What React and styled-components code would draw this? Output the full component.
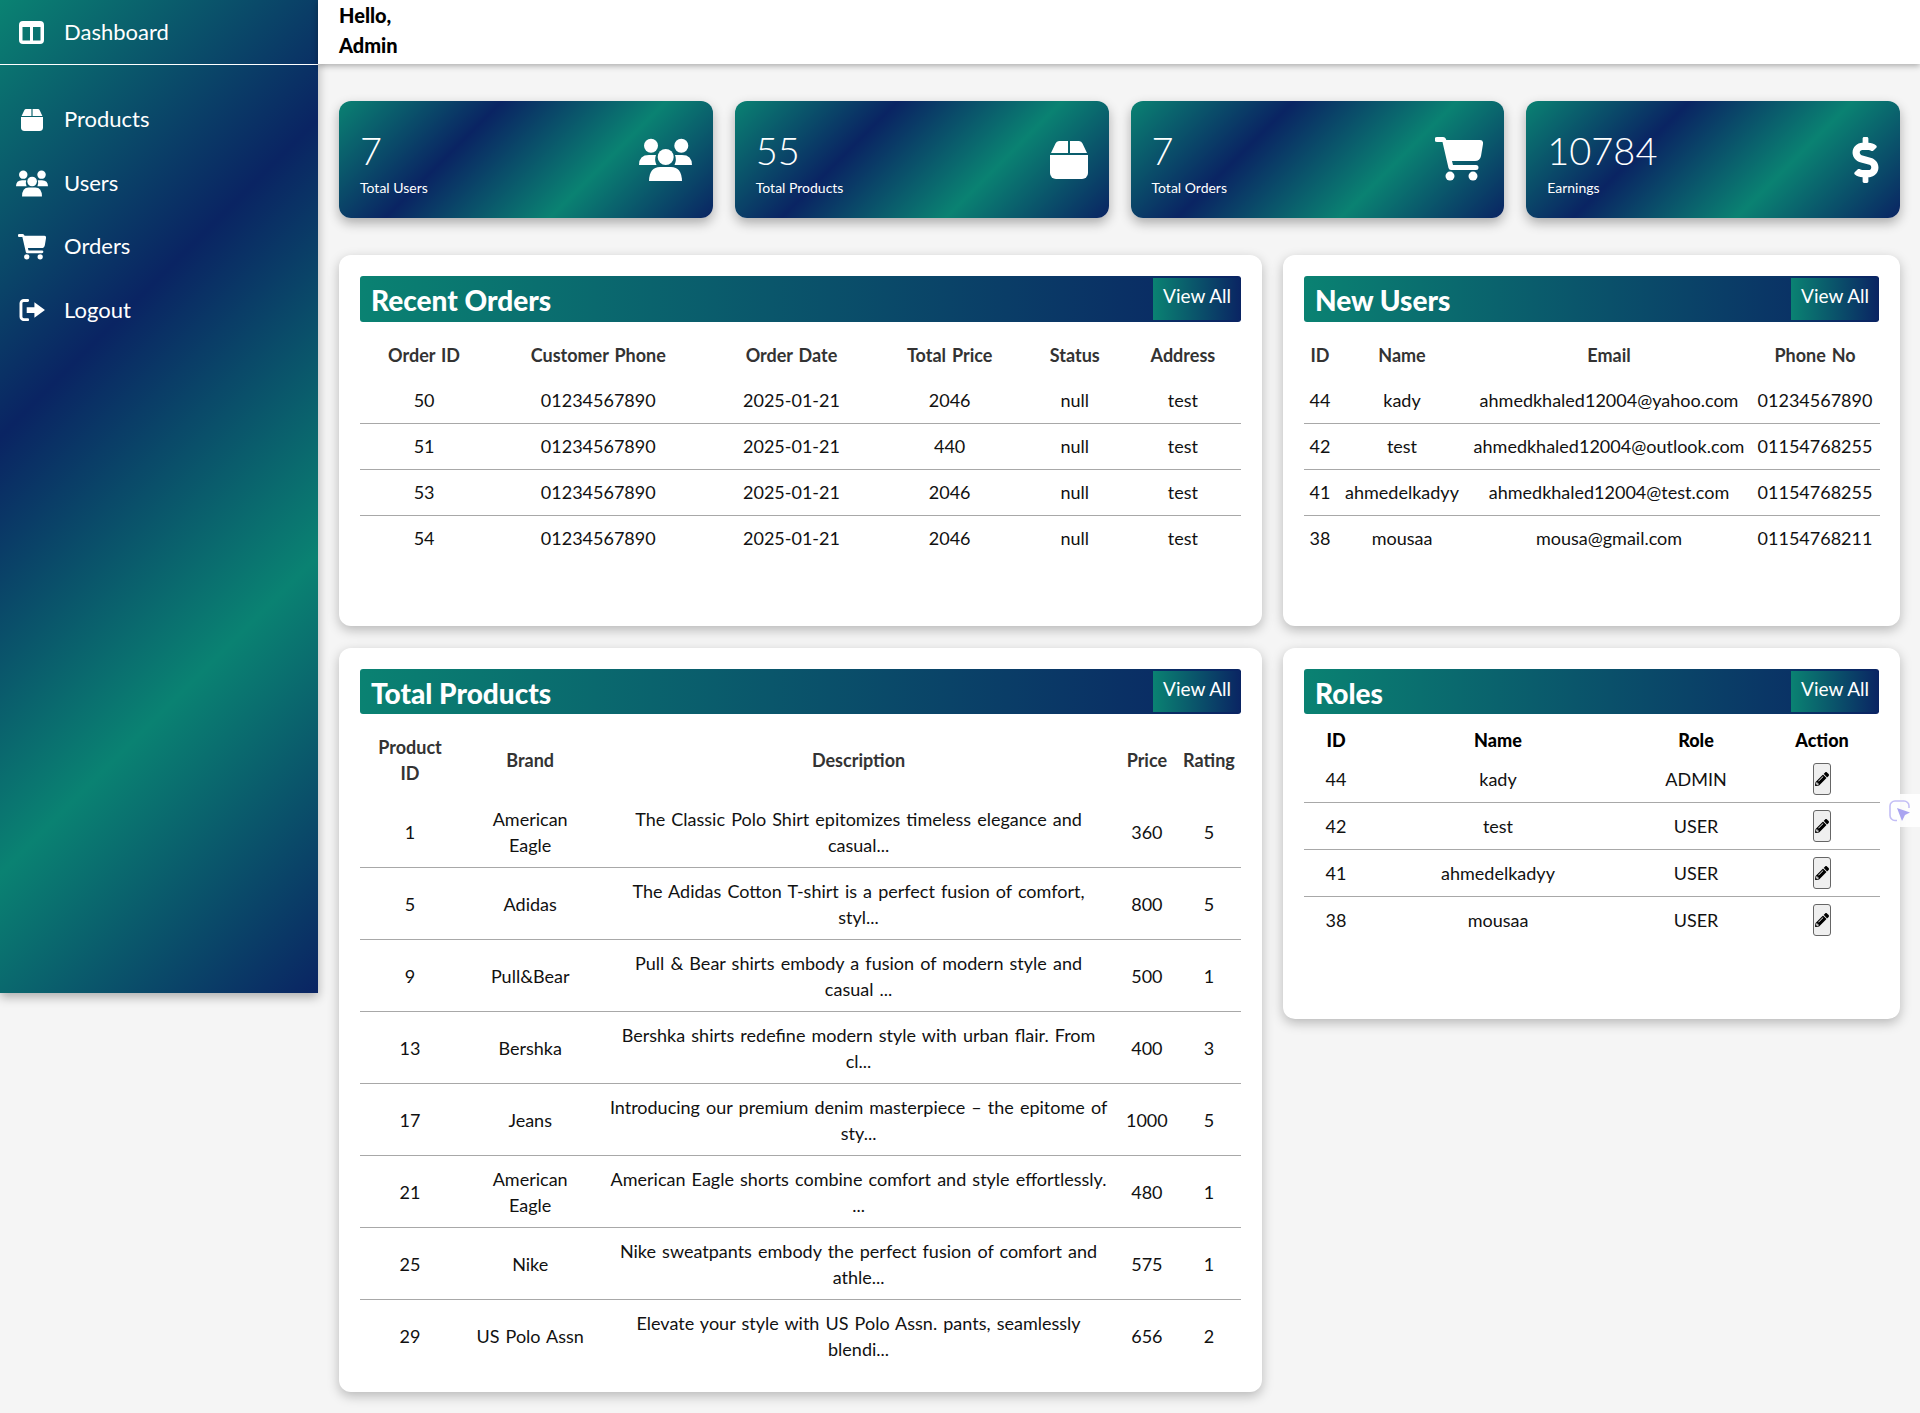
import React from "react";
import styled, { createGlobalStyle } from "styled-components";
import { FaDollarSign, FaPencilAlt } from "react-icons/fa";

const teal = "#0a8272";
const navy = "#0a2463";
const multi = `linear-gradient(135deg, ${teal}, ${navy}, ${teal}, ${navy})`;
const bar = `linear-gradient(to right, ${teal}, ${navy})`;

const Global = createGlobalStyle`
  * { box-sizing: border-box; }
  html, body { margin: 0; background: #f5f5f5; }
  body { font-family: "Lato", "Liberation Sans", sans-serif; color: #000; }
`;

const Page = styled.div`
  display: flex;
  align-items: flex-start;
  min-height: 1413px;
  position: relative;
  overflow: hidden;
`;

const Sidebar = styled.aside`
  width: 318px;
  height: 993px;
  flex-shrink: 0;
  background: ${multi};
  box-shadow: 0 4px 10px rgba(0, 0, 0, 0.3);
  color: #fff;
`;

const Brand = styled.div`
  height: 65px;
  display: flex;
  align-items: center;
  border-bottom: 1px solid #fff;
`;

const NavList = styled.nav`
  display: flex;
  flex-direction: column;
  padding-top: 23px;
`;

const NavItem = styled.div`
  height: 63.5px;
  display: flex;
  align-items: center;
`;

const NavIcon = styled.span`
  width: 64px;
  display: flex;
  justify-content: center;
  padding-right: 1px;
`;

const NavLabel = styled.span`
  font-size: 22px;
  position: relative;
  top: -1px;
`;

const Main = styled.main`
  flex: 1;
  min-width: 0;
`;

const TopBar = styled.header`
  height: 64px;
  background: #fff;
  box-shadow: 0 2px 6px rgba(0, 0, 0, 0.3);
  padding: 0 21px;
  font-size: 20px;
  font-weight: 900;
  line-height: 30px;
`;

const Content = styled.div`
  padding: 37px 20px 21px 21px;
`;

const StatRow = styled.section`
  display: grid;
  grid-template-columns: repeat(4, 1fr);
  gap: 22px;
  margin-bottom: 37px;
`;

const StatCard = styled.div`
  height: 117px;
  display: flex;
  align-items: center;
  justify-content: space-between;
  padding: 0 21px;
  border-radius: 12px;
  background: ${multi};
  box-shadow: 0 5px 12px rgba(0, 0, 0, 0.3);
  color: #fff;
`;

const StatValue = styled.div`
  margin-top: 4px;
  font-size: 38px;
  font-weight: 300;
  line-height: 50px;
`;

const StatLabel = styled.div`
  font-size: 14px;
  line-height: 20px;
  margin-top: 3px;
`;

const StatIcon = styled.span`
  display: flex;
`;

const Dollar = styled(FaDollarSign)`
  width: 27px;
  height: 46px;
`;

const PanelGrid = styled.section`
  display: grid;
  grid-template-columns: 923px 617px;
  gap: 21.5px 21px;
  align-items: start;
`;

const Panel = styled.div`
  min-height: 371px;
  padding: 21px;
  background: #fff;
  border-radius: 12px;
  box-shadow: 0 4px 12px rgba(0, 0, 0, 0.25);
`;

const PanelHead = styled.div`
  height: 45.5px;
  margin-bottom: 10px;
  display: flex;
  justify-content: space-between;
  align-items: flex-start;
  padding: 2px 0 0 11px;
  border-radius: 3px;
  background: ${bar};
  color: #fff;
`;

const PanelTitle = styled.h2`
  margin: 0;
  font-size: 28px;
  font-weight: 900;
  line-height: 44px;
`;

const ViewAll = styled.button`
  width: 88px;
  height: 41.5px;
  border: 0;
  padding: 0 0 6px;
  background: ${bar};
  color: #fff;
  font: 400 19px "Lato", "Liberation Sans", sans-serif;
`;

const Table = styled.table`
  width: 100%;
  table-layout: fixed;
  border-collapse: collapse;
  text-align: center;
  font-size: 18px;
  line-height: 26px;
  word-spacing: 1.5px;
`;

const Th = styled.th`
  padding: ${(p) => (p.$tight ? "3px" : "10px")} 0;
  font-weight: ${(p) => (p.$tight ? 900 : 700)};
  color: ${(p) => (p.$tight ? "#000" : "#333")};
  white-space: pre-line;
`;

const Td = styled.td`
  padding: ${(p) => (p.$tight ? "7px" : "9.5px")} 0;
  color: #111;
  white-space: pre-line;
`;

const Tr = styled.tr`
  border-bottom: 1px solid #a8a8a8;
  &:last-child { border-bottom: 0; }
`;

const EditButton = styled.button`
  width: 18px;
  height: 32px;
  padding: 0;
  display: inline-flex;
  align-items: center;
  justify-content: center;
  vertical-align: middle;
  font-size: 14px;
  color: #000;
  background: #efefef;
  border: 1px solid #666;
  border-radius: 3px;
`;

const EdgeTab = styled.div`
  position: absolute;
  top: 794px;
  right: 0;
  width: 37px;
  height: 33px;
  display: flex;
  align-items: center;
  padding-left: 6px;
  background: rgba(255, 255, 255, 0.85);
  border-radius: 8px 0 0 8px;
`;

function ColumnsIcon({ size }) {
  return (
    <svg width={size} height={size * 0.92} viewBox="0 0 25 23" fill="#fff">
      <path
        fillRule="evenodd"
        d="M4 0H21a4 4 0 0 1 4 4V19a4 4 0 0 1-4 4H4a4 4 0 0 1-4-4V4a4 4 0 0 1 4-4ZM3.500 6V19.500H11V6ZM14 6V19.500H21.500V6Z"
      />
    </svg>
  );
}

function BoxIcon({ size }) {
  return (
    <svg width={size} height={size} viewBox="0 0 38 38" fill="#fff">
      <path d="M1 12L5.500 2.500Q6.500 0 9 0H18V12Z" />
      <path d="M20 0H29Q31.500 0 32.500 2.500L37 12H20Z" />
      <path d="M0 14H38V32a6 6 0 0 1-6 6H6a6 6 0 0 1-6-6Z" />
    </svg>
  );
}

function UsersIcon({ size }) {
  return (
    <svg width={size} height={size * 0.83} viewBox="0 0 53 44" fill="#fff">
      <circle cx="12" cy="7.700" r="7" />
      <circle cx="42.300" cy="7.700" r="7" />
      <circle cx="26.700" cy="19" r="8" />
      <path d="M0 27Q0 17 10 17H17Q15 22 17.500 27Z" />
      <path d="M53 27Q53 17 43 17H36Q38 22 35.500 27Z" />
      <path d="M10 44Q10 29 21 29H32Q43 29 43 44Z" />
    </svg>
  );
}

function CartIcon({ size }) {
  return (
    <svg width={size} height={size * 0.92} viewBox="0 0 48 44" fill="#fff">
      <path d="M2 0H8Q10.500 0 11.300 3H45Q48.500 3 48 7L46 19Q45 24 40 24H17L18 28H41a2.500 2.500 0 0 1 0 5H16Q14 33 13.500 31L7.500 5H2a2.500 2.500 0 0 1 0-5Z" />
      <circle cx="15" cy="39" r="4.500" />
      <circle cx="38" cy="39" r="4.500" />
    </svg>
  );
}

function LogoutIcon({ size }) {
  return (
    <svg width={size} height={size * 0.85} viewBox="0 0 27 23">
      <path d="M9 1.500H5a3 3 0 0 0-3 3v14a3 3 0 0 0 3 3h4" fill="none" stroke="#fff" strokeWidth="3" strokeLinecap="round" />
      <path d="M8 8.500H16V3.500L27 11.500 16 19.500V14.500H8Z" fill="#fff" />
    </svg>
  );
}

const stats = [
  { value: "7", label: "Total Users", icon: <UsersIcon size={53} /> },
  { value: "55", label: "Total Products", icon: <BoxIcon size={38} /> },
  { value: "7", label: "Total Orders", icon: <CartIcon size={48} /> },
  { value: "10784", label: "Earnings", icon: <Dollar /> },
];

const nav = [
  { label: "Products", icon: <BoxIcon size={22} /> },
  { label: "Users", icon: <UsersIcon size={32} /> },
  { label: "Orders", icon: <CartIcon size={28} /> },
  { label: "Logout", icon: <LogoutIcon size={26} /> },
];

const orders = [
  ["50", "01234567890", "2025-01-21", "2046", "null", "test"],
  ["51", "01234567890", "2025-01-21", "440", "null", "test"],
  ["53", "01234567890", "2025-01-21", "2046", "null", "test"],
  ["54", "01234567890", "2025-01-21", "2046", "null", "test"],
];

const users = [
  ["44", "kady", "ahmedkhaled12004@yahoo.com", "01234567890"],
  ["42", "test", "ahmedkhaled12004@outlook.com", "01154768255"],
  ["41", "ahmedelkadyy", "ahmedkhaled12004@test.com", "01154768255"],
  ["38", "mousaa", "mousa@gmail.com", "01154768211"],
];

const products = [
  ["1", "American\nEagle", "The Classic Polo Shirt epitomizes timeless elegance and\ncasual...", "360", "5"],
  ["5", "Adidas", "The Adidas Cotton T-shirt is a perfect fusion of comfort,\nstyl...", "800", "5"],
  ["9", "Pull&Bear", "Pull & Bear shirts embody a fusion of modern style and\ncasual ...", "500", "1"],
  ["13", "Bershka", "Bershka shirts redefine modern style with urban flair. From\ncl...", "400", "3"],
  ["17", "Jeans", "Introducing our premium denim masterpiece – the epitome of\nsty...", "1000", "5"],
  ["21", "American\nEagle", "American Eagle shorts combine comfort and style effortlessly.\n...", "480", "1"],
  ["25", "Nike", "Nike sweatpants embody the perfect fusion of comfort and\nathle...", "575", "1"],
  ["29", "US Polo Assn", "Elevate your style with US Polo Assn. pants, seamlessly\nblendi...", "656", "2"],
];

const roles = [
  ["44", "kady", "ADMIN"],
  ["42", "test", "USER"],
  ["41", "ahmedelkadyy", "USER"],
  ["38", "mousaa", "USER"],
];

function DataTable({ widths, heads, rows }) {
  return (
    <Table>
      <colgroup>
        {widths.map((w, i) => <col key={i} width={w} />)}
      </colgroup>
      <thead>
        <tr>{heads.map((h) => <Th key={h}>{h}</Th>)}</tr>
      </thead>
      <tbody>
        {rows.map((row) => (
          <Tr key={row[0]}>
            {row.map((cell, i) => <Td key={i}>{cell}</Td>)}
          </Tr>
        ))}
      </tbody>
    </Table>
  );
}

function Head({ title }) {
  return (
    <PanelHead>
      <PanelTitle>{title}</PanelTitle>
      <ViewAll type="button">View All</ViewAll>
    </PanelHead>
  );
}

export default function App() {
  return (
    <Page>
      <Global />
      <Sidebar>
        <Brand>
          <NavIcon><ColumnsIcon size={25} /></NavIcon>
          <NavLabel>Dashboard</NavLabel>
        </Brand>
        <NavList>
          {nav.map((item) => (
            <NavItem key={item.label}>
              <NavIcon>{item.icon}</NavIcon>
              <NavLabel>{item.label}</NavLabel>
            </NavItem>
          ))}
        </NavList>
      </Sidebar>
      <Main>
        <TopBar>Hello,<br />Admin</TopBar>
        <Content>
          <StatRow>
            {stats.map((s) => (
              <StatCard key={s.label}>
                <div>
                  <StatValue>{s.value}</StatValue>
                  <StatLabel>{s.label}</StatLabel>
                </div>
                <StatIcon>{s.icon}</StatIcon>
              </StatCard>
            ))}
          </StatRow>
          <PanelGrid>
            <Panel>
              <Head title="Recent Orders" />
              <DataTable
                widths={[128, 220, 166, 150, 100, 116]}
                heads={["Order ID", "Customer Phone", "Order Date", "Total Price", "Status", "Address"]}
                rows={orders}
              />
            </Panel>
            <Panel>
              <Head title="New Users" />
              <DataTable
                widths={[32, 132, 282, 130]}
                heads={["ID", "Name", "Email", "Phone No"]}
                rows={users}
              />
            </Panel>
            <Panel>
              <Head title="Total Products" />
              <DataTable
                widths={[100, 140, 516, 60, 64]}
                heads={["Product\nID", "Brand", "Description", "Price", "Rating"]}
                rows={products}
              />
            </Panel>
            <Panel>
              <Head title="Roles" />
              <Table>
                <colgroup>
                  <col width={64} /><col width={260} /><col width={136} /><col width={116} />
                </colgroup>
                <thead>
                  <tr>
                    {["ID", "Name", "Role", "Action"].map((h) => <Th $tight key={h}>{h}</Th>)}
                  </tr>
                </thead>
                <tbody>
                  {roles.map((r) => (
                    <Tr key={r[0]}>
                      {r.map((cell, i) => <Td $tight key={i}>{cell}</Td>)}
                      <Td $tight><EditButton type="button"><FaPencilAlt /></EditButton></Td>
                    </Tr>
                  ))}
                </tbody>
              </Table>
            </Panel>
          </PanelGrid>
        </Content>
      </Main>
      <EdgeTab>
        <svg width="22" height="22" viewBox="0 0 22 22" fill="none">
          <path d="M8 20.500H6a5 5 0 0 1-5-5V6a5 5 0 0 1 5-5h9a5 5 0 0 1 5 5v2" stroke="#c3bef5" strokeWidth="1.600" />
          <path d="M8 8L21 12.500 16 15 13 21Z" fill="#aaa4f0" />
        </svg>
      </EdgeTab>
    </Page>
  );
}
